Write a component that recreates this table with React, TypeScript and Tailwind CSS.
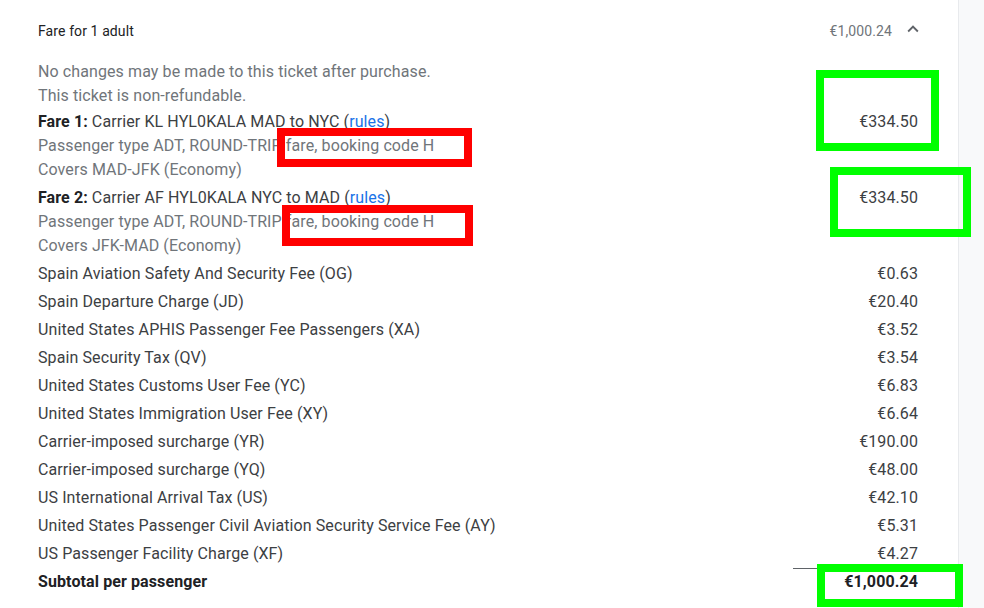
const fees: [string, string][] = [
  ["Spain Aviation Safety And Security Fee (OG)", "€0.63"],
  ["Spain Departure Charge (JD)", "€20.40"],
  ["United States APHIS Passenger Fee Passengers (XA)", "€3.52"],
  ["Spain Security Tax (QV)", "€3.54"],
  ["United States Customs User Fee (YC)", "€6.83"],
  ["United States Immigration User Fee (XY)", "€6.64"],
  ["Carrier-imposed surcharge (YR)", "€190.00"],
  ["Carrier-imposed surcharge (YQ)", "€48.00"],
  ["US International Arrival Tax (US)", "€42.10"],
  ["United States Passenger Civil Aviation Security Service Fee (AY)", "€5.31"],
  ["US Passenger Facility Charge (XF)", "€4.27"],
];

function FareBlock({ n, carrier, route, covers }: { n: number; carrier: string; route: string; covers: string }) {
  return (
    <div className="flex justify-between py-[2px]">
      <div>
        <div className="text-[#3c4043]">
          <span className="font-bold text-[#202124]">Fare {n}:</span> Carrier {carrier} HYL0KALA {route}{" "}
          (<span className="text-[#1a73e8]">rules</span>)
        </div>
        <div className="text-[#70757a]">Passenger type ADT, ROUND-TRIP fare, booking code H</div>
        <div className="text-[#70757a]">Covers {covers} (Economy)</div>
      </div>
      <div className="text-[#3c4043]">€334.50</div>
    </div>
  );
}

export default function App() {
  return (
    <div className="relative flex h-[608px] w-[984px] overflow-hidden bg-white font-['Roboto',sans-serif]">
      <div className="w-[958px] shrink-0 pl-[38px] pr-[40px]">
        <div className="flex h-[60px] items-center justify-between pt-[3px] text-[14px] tracking-[0.1px]">
          <span className="text-[#202124]">Fare for 1 adult</span>
          <div className="flex items-center gap-[10px]">
            <span className="text-[#70757a]">€1,000.24</span>
            <svg width="22" height="22" viewBox="0 0 24 24" className="mr-[-6px] mb-[6px]">
              <path d="M7.41 15.41L12 10.83l4.59 4.58L18 14l-6-6-6 6z" fill="#5f6368" />
            </svg>
          </div>
        </div>
        <div className="text-[16px] leading-[24px] tracking-[0.1px]">
          <div className="text-[#70757a]">
            <div>No changes may be made to this ticket after purchase.</div>
            <div>This ticket is non-refundable.</div>
          </div>
          <FareBlock n={1} carrier="KL" route="MAD to NYC" covers="MAD-JFK" />
          <FareBlock n={2} carrier="AF" route="NYC to MAD" covers="JFK-MAD" />
          {fees.map(([label, amount]) => (
            <div key={label} className="flex justify-between py-[2px] text-[#3c4043]">
              <span>{label}</span>
              <span>{amount}</span>
            </div>
          ))}
          <div className="flex justify-between font-bold text-[#202124]">
            <span className="py-[2px]">Subtotal per passenger</span>
            <span className="w-[125px] border-t border-[#5f6368] py-[1px] text-right">€1,000.24</span>
          </div>
        </div>
      </div>
      <div className="flex-1 border-l border-[#e8eaed] bg-[#f8f9fa]" />

      <div className="absolute left-[277px] top-[128px] h-[39px] w-[195px] border-[8px] border-[#ff0000]" />
      <div className="absolute left-[282px] top-[205px] h-[41px] w-[191px] border-[8px] border-[#ff0000]" />
      <div className="absolute left-[816px] top-[70px] h-[81px] w-[123px] border-[8px] border-[#00ff00]" />
      <div className="absolute left-[830px] top-[167px] h-[70px] w-[141px] border-[8px] border-[#00ff00]" />
      <div className="absolute left-[817px] top-[564px] h-[43px] w-[146px] border-[8px] border-[#00ff00]" />
    </div>
  );
}
